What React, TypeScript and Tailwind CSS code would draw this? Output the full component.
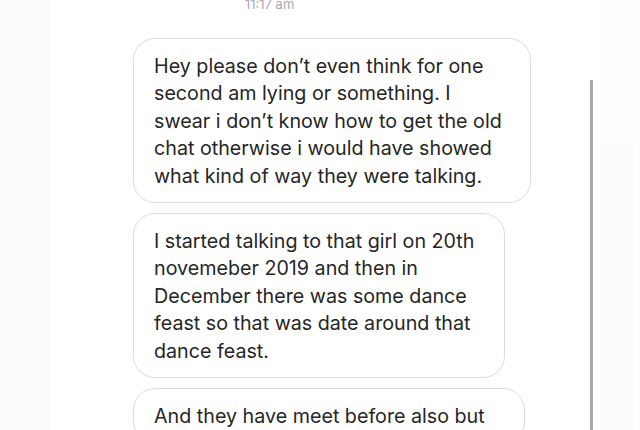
import React from 'react';

interface Message {
  id: number;
  lines: string[];
  width: string;
}

const messages: Message[] = [
  {
    id: 1,
    width: 'w-[398px]',
    lines: [
      'Hey please don’t even think for one',
      'second am lying or something. I',
      'swear i don’t know how to get the old',
      'chat otherwise i would have showed',
      'what kind of way they were talking.',
    ],
  },
  {
    id: 2,
    width: 'w-[372px]',
    lines: [
      'I started talking to that girl on 20th',
      'novemeber 2019 and then in',
      'December there was some dance',
      'feast so that was date around that',
      'dance feast.',
    ],
  },
  {
    id: 3,
    width: 'w-[392px]',
    lines: ['And they have meet before also but'],
  },
];

const Bubble: React.FC<{ message: Message }> = ({ message }) => (
  <div
    className={`${message.width} shrink-0 rounded-[22px] border border-[#dcdcdc] bg-white pl-5 pr-4 pt-[14px] pb-[12px] text-[19.7px] leading-[27.4px] text-[#262626]`}
  >
    {message.lines.map((line, i) => (
      <div key={i} className="whitespace-nowrap">
        {line}
      </div>
    ))}
  </div>
);

export default function App() {
  return (
    <div
      className="flex h-[430px] w-[640px] overflow-hidden bg-white"
      style={{ fontFamily: 'Inter, "Liberation Sans", sans-serif' }}
    >
      {/* left rail */}
      <div className="w-[50px] shrink-0 bg-[#fbfbfb]" />

      {/* chat column */}
      <div className="flex min-h-0 flex-1 flex-col">
        <div className="-mt-[4px] pl-[195px] text-[13px] leading-[16px] text-[#a8a8a8]">11:17 am</div>
        <div className="mt-[26px] flex flex-col gap-[10px] pl-[83px]">
          {messages.map((m) => (
            <Bubble key={m.id} message={m} />
          ))}
        </div>
      </div>

      {/* scrollbar */}
      <div className="flex w-[10px] shrink-0 flex-col pt-[80px]">
        <div className="w-[3px] flex-1 bg-[#a9a9a9]" />
      </div>

      {/* right rail */}
      <div className="flex w-[40px] shrink-0 flex-col bg-[#fdfdfd] pt-[145px]">
        <div className="w-[33px] flex-1 bg-[#fbfbfb]" />
      </div>
    </div>
  );
}
